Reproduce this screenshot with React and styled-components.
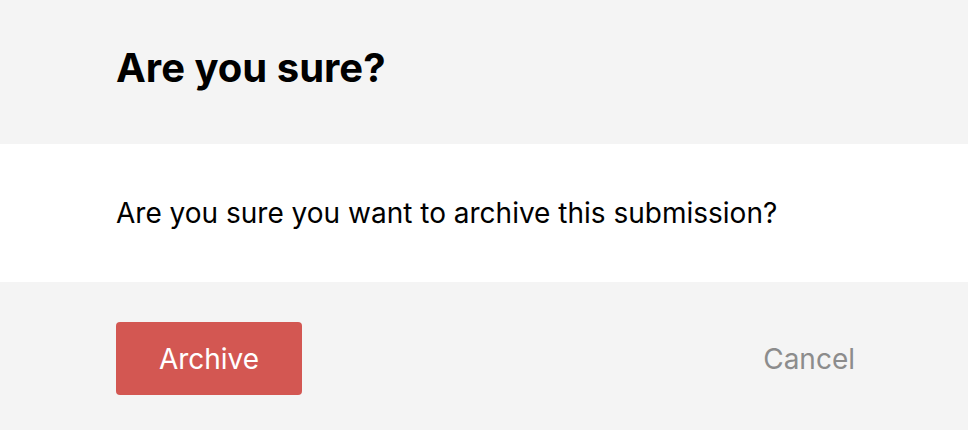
import React from 'react';
import styled, { createGlobalStyle } from 'styled-components';

const GlobalStyle = createGlobalStyle`
    html, body {
        margin: 0;
        padding: 0;
        background-color: #f4f4f4;
    }
    body {
        font-family: Inter, 'Liberation Sans', sans-serif;
        -webkit-font-smoothing: antialiased;
    }
`;

const Dialog = styled.div`
    display: flex;
    flex-direction: column;
    width: 968px;
    height: 430px;
    background-color: #f4f4f4;
`;

const Header = styled.div`
    display: flex;
    align-items: center;
    height: 144px;
    padding: 0 116px 10px;
    box-sizing: border-box;
`;

const Title = styled.h1`
    margin: 0;
    font-size: 40px;
    font-weight: 700;
    color: #000;
`;

const Body = styled.div`
    display: flex;
    align-items: center;
    height: 138px;
    padding: 0 116px;
    box-sizing: border-box;
    background-color: #fff;
`;

const Message = styled.p`
    margin: 0;
    font-size: 28px;
    color: #000;
`;

const Footer = styled.div`
    display: flex;
    align-items: flex-start;
    justify-content: space-between;
    flex-grow: 1;
    padding: 40px 113px 0 116px;
    box-sizing: border-box;
`;

const Button = styled.button`
    height: 73px;
    padding: 0;
    width: ${p => (p.$primary ? '186px' : 'auto')};
    border: none;
    border-radius: 4px;
    font-family: inherit;
    font-size: 28px;
    cursor: pointer;
    background-color: ${p => (p.$primary ? '#d35752' : 'transparent')};
    color: ${p => (p.$primary ? '#fff' : '#8c8c8c')};
`;

const App = () => <Dialog>
    <GlobalStyle />
    <Header>
        <Title>{'Are you sure?'}</Title>
    </Header>
    <Body>
        <Message>{'Are you sure you want to archive this submission?'}</Message>
    </Body>
    <Footer>
        <Button $primary>{'Archive'}</Button>
        <Button>{'Cancel'}</Button>
    </Footer>
</Dialog>;

export default App;
